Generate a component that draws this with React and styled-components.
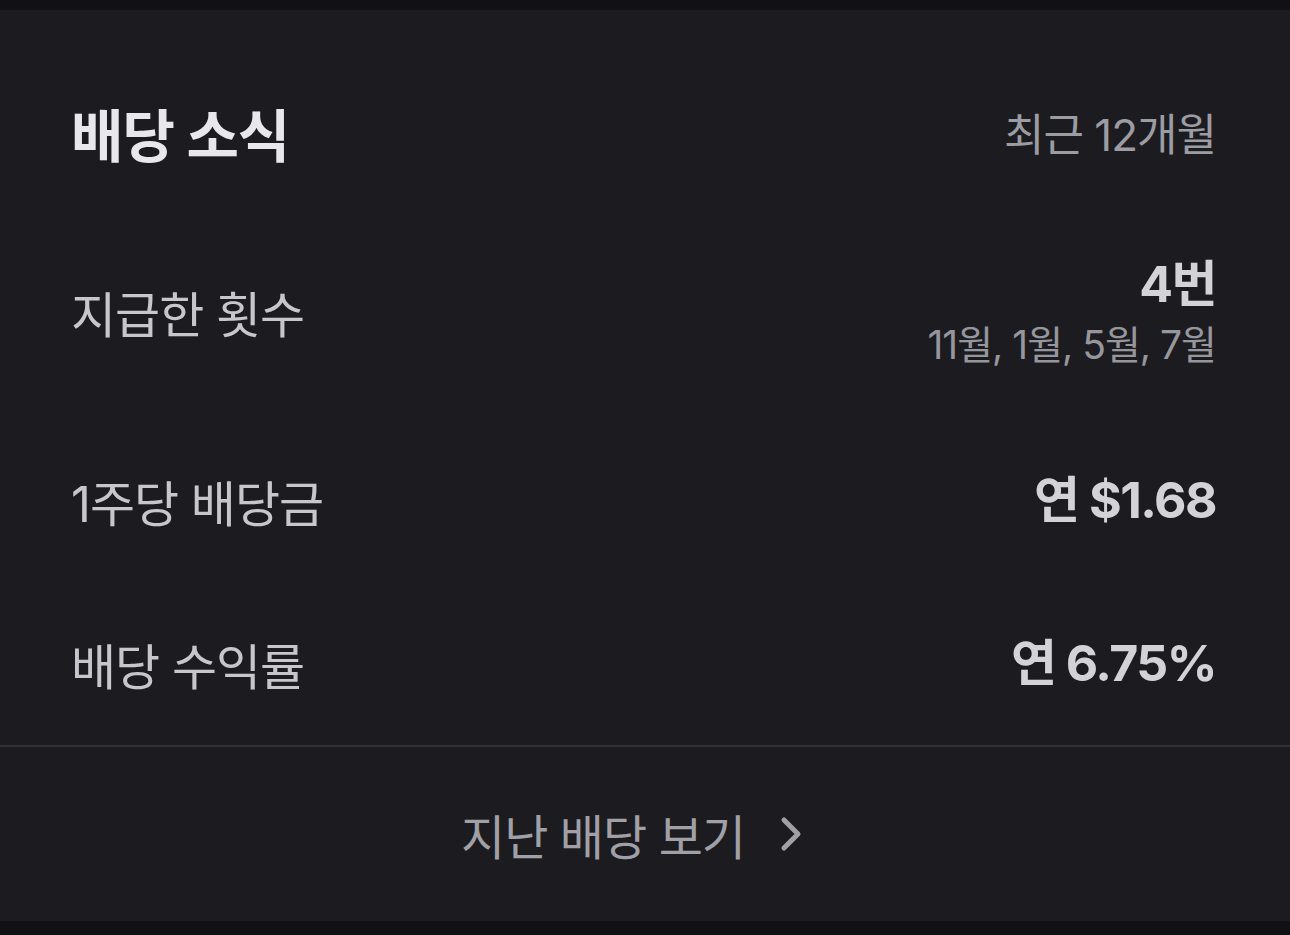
import React from "react";
import styled, { createGlobalStyle } from "styled-components";

const GlobalStyle = createGlobalStyle`
  html, body {
    margin: 0;
    padding: 0;
    background: #111115;
  }
  body {
    font-family: Inter, "Noto Sans CJK KR", "Noto Sans", sans-serif;
    -webkit-font-smoothing: antialiased;
  }
`;

const Page = styled.div`
  width: 1290px;
  height: 935px;
  padding-top: 10px;
  box-sizing: border-box;
  background: #111115;
`;

const Card = styled.section`
  height: 911px;
  background: #1b1b20;
  display: flex;
  flex-direction: column;
`;

const Header = styled.div`
  height: 244px;
  padding: 0 74px 0 71px;
  display: flex;
  align-items: center;
  justify-content: space-between;
`;

const Title = styled.h2`
  margin: 0;
  font-size: 57px;
  font-weight: 700;
  color: #e8e8ec;
  letter-spacing: -1px;
`;

const Period = styled.span`
  font-size: 44px;
  color: #9c9ca3;
  letter-spacing: -1px;
`;

const Row = styled.div`
  height: ${(p) => p.$h}px;
  margin-top: ${(p) => p.$mt || 0}px;
  padding: 0 74px 0 71px;
  display: flex;
  align-items: center;
  justify-content: space-between;
`;

const Label = styled.span`
  font-size: 49px;
  color: #c6c6cc;
  letter-spacing: -1px;
`;

const ValueCol = styled.div`
  display: flex;
  flex-direction: column;
  align-items: flex-end;
  gap: 8px;
`;

const Value = styled.span`
  font-size: 50px;
  font-weight: 700;
  color: #d2d2d7;
  letter-spacing: -1.5px;
  line-height: 1.2;
`;

const SubValue = styled.span`
  font-size: 39px;
  color: #96969d;
  letter-spacing: -1px;
  line-height: 1.2;
`;

const Divider = styled.hr`
  margin: 32px 0 0;
  border: 0;
  height: 2px;
  background: #313136;
`;

const Footer = styled.button`
  flex: 1;
  border: 0;
  background: transparent;
  display: flex;
  align-items: center;
  justify-content: center;
  cursor: pointer;
  font-family: inherit;
  padding: 0;
`;

const FooterText = styled.span`
  font-size: 48px;
  color: #a0a0a6;
  letter-spacing: -1px;
`;

const Chevron = styled.svg`
  width: 60px;
  height: 60px;
  margin-left: 24px;
`;

const rows = [
  { label: "1주당 배당금", value: "연 $1.68", mt: 82 },
  { label: "배당 수익률", value: "연 6.75%", mt: 63 },
];

export default function App() {
  return (
    <>
      <GlobalStyle />
      <Page>
        <Card>
          <Header>
            <Title>배당 소식</Title>
            <Period>최근 12개월</Period>
          </Header>
          <Row $h={114}>
            <Label>지급한 횟수</Label>
            <ValueCol>
              <Value>4번</Value>
              <SubValue>11월, 1월, 5월, 7월</SubValue>
            </ValueCol>
          </Row>
          {rows.map((r) => (
            <Row key={r.label} $h={100} $mt={r.mt}>
              <Label>{r.label}</Label>
              <Value>{r.value}</Value>
            </Row>
          ))}
          <Divider />
          <Footer>
            <FooterText>지난 배당 보기</FooterText>
            <Chevron viewBox="0 0 60 60">
              <polyline
                points="15,16 29,30 15,44"
                fill="none"
                stroke="#a0a0a6"
                strokeWidth="5"
                strokeLinecap="round"
                strokeLinejoin="round"
              />
            </Chevron>
          </Footer>
        </Card>
      </Page>
    </>
  );
}
